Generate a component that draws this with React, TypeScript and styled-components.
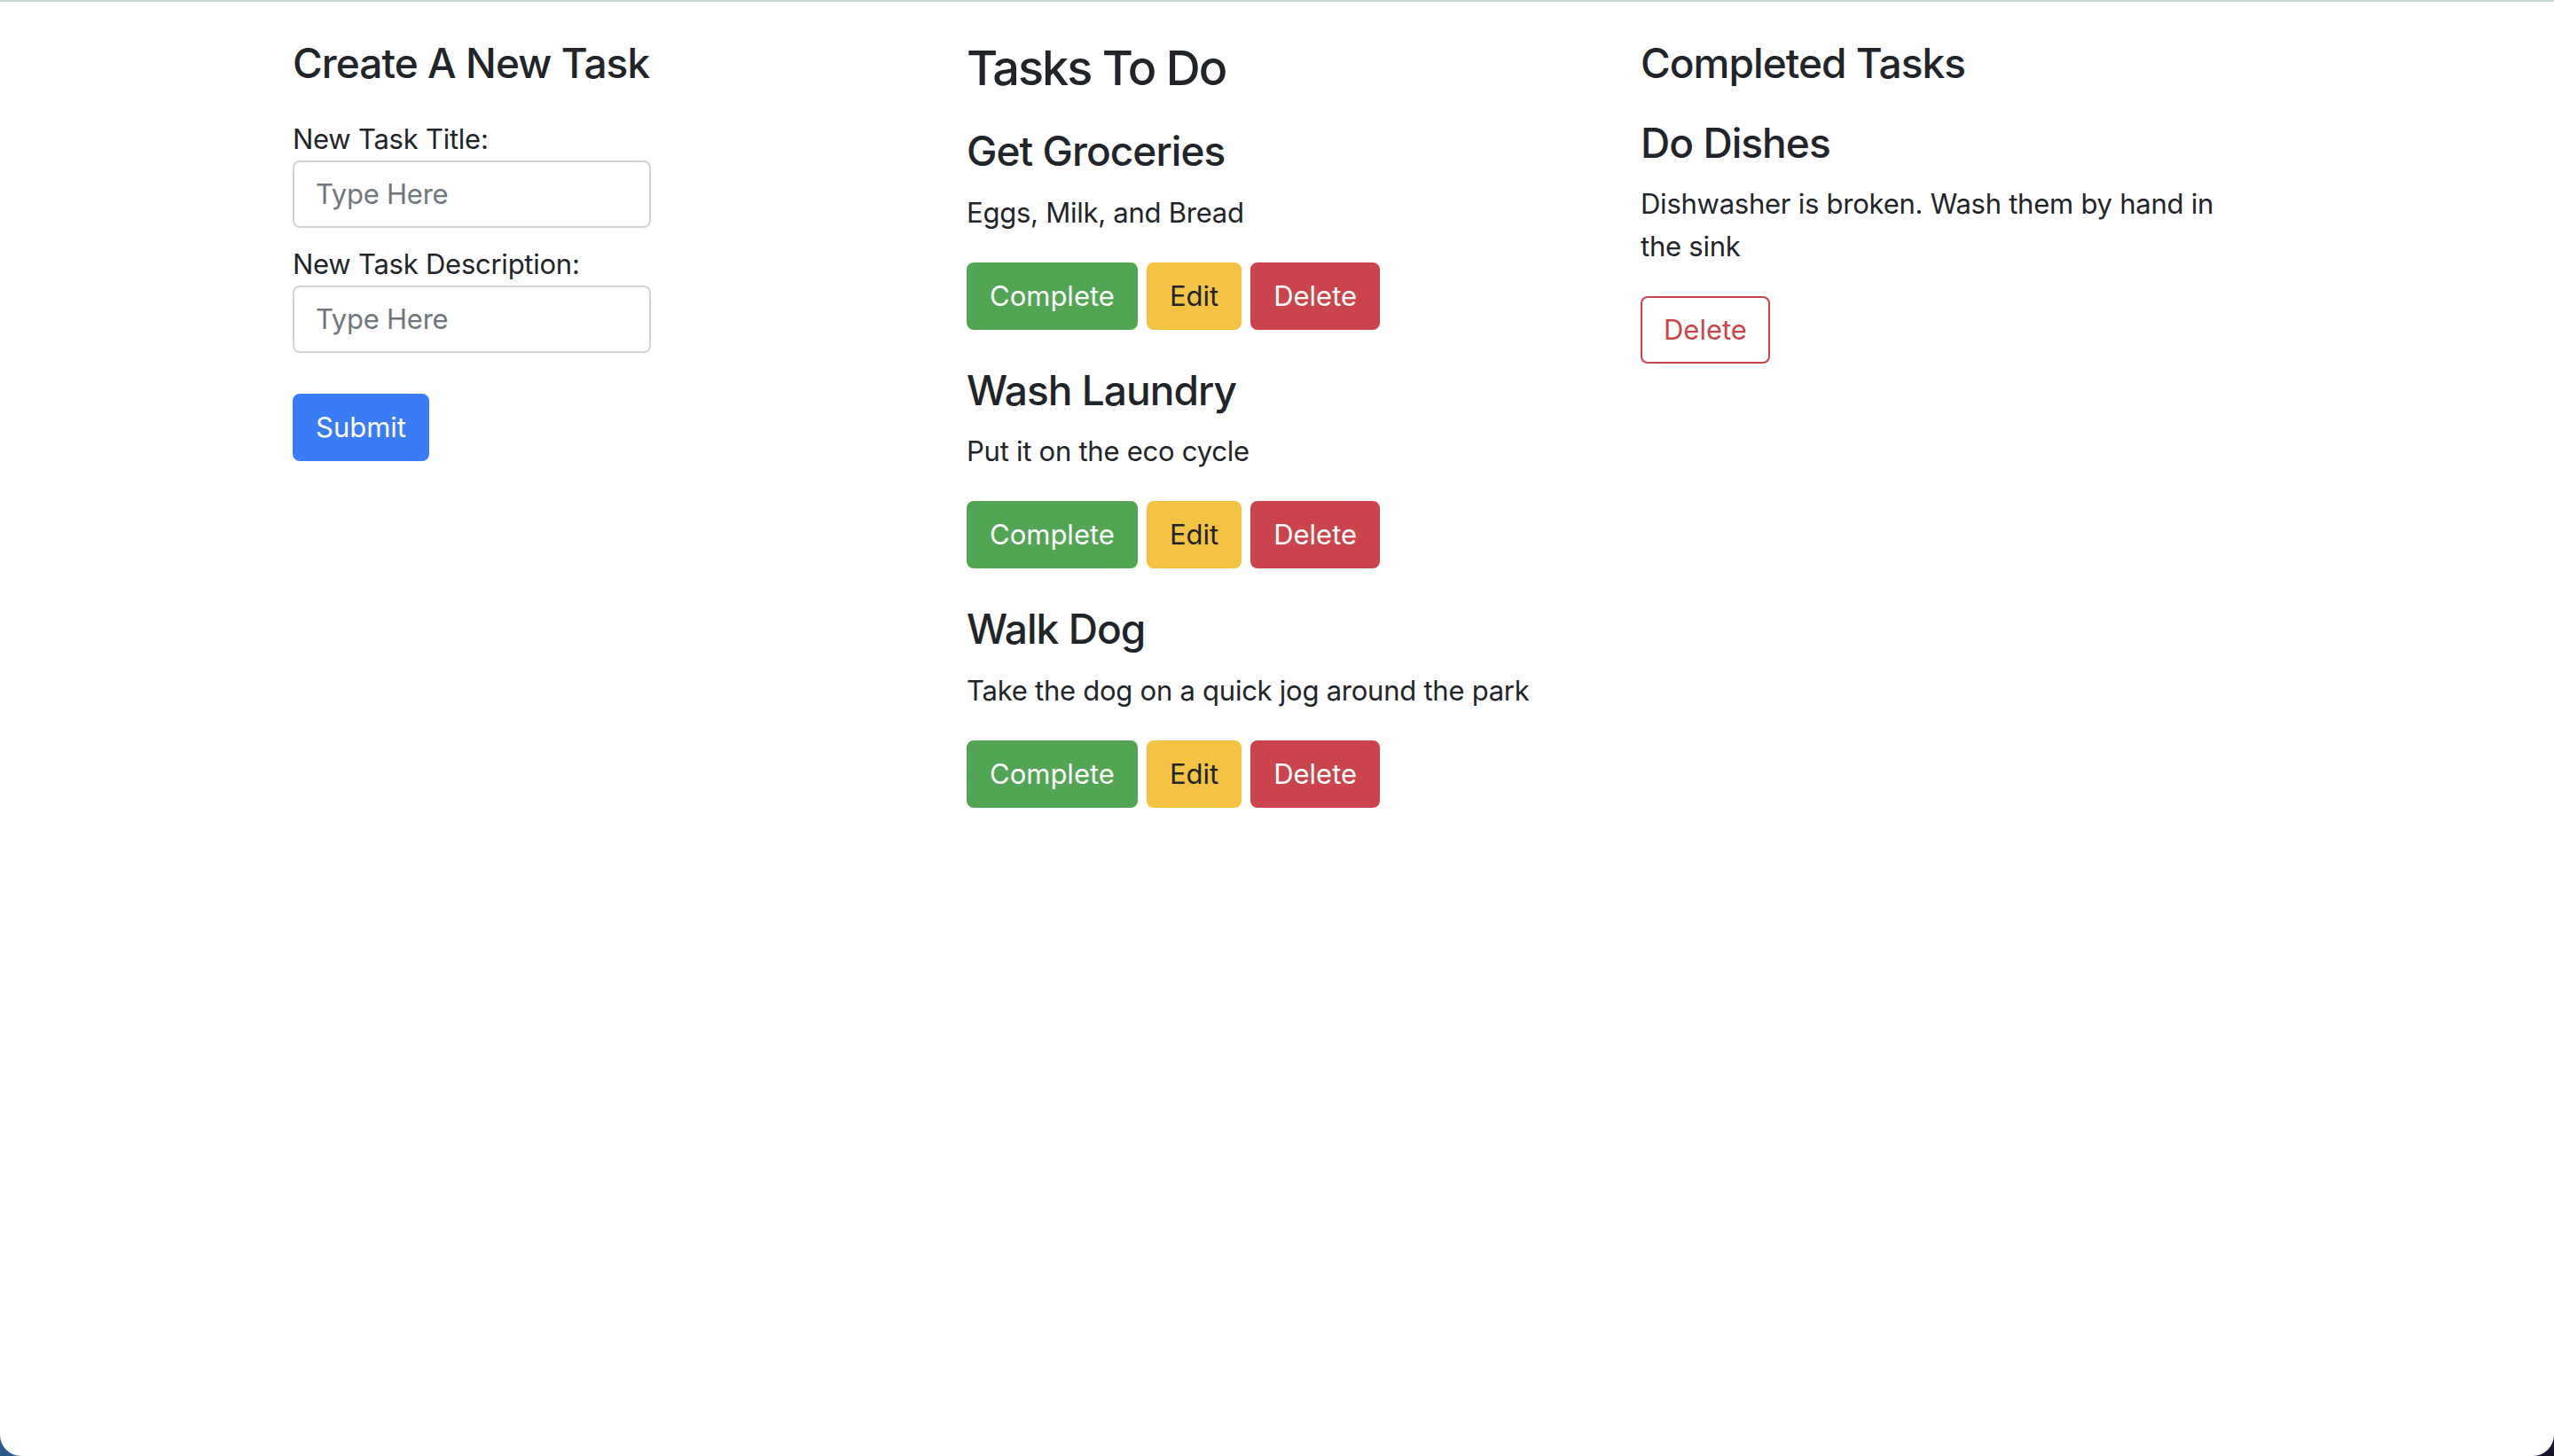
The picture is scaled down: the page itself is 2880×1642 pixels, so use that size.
import React from "react";
import styled, { createGlobalStyle, css } from "styled-components";

const GlobalStyle = createGlobalStyle`
  html, body {
    margin: 0;
    padding: 0;
  }
  body {
    background: linear-gradient(90deg, #2b5b8e 0%, #1d2a52 50%, #15152c 100%);
    font-family: Inter, "Noto Sans", "Liberation Sans", sans-serif;
    color: #212529;
  }
  * { box-sizing: border-box; }
`;

const Window = styled.div`
  min-height: 1642px;
  background: #ffffff;
  border-top: 2px solid #c6d8cd;
  border-bottom-left-radius: 24px;
  border-bottom-right-radius: 24px;
`;

const Container = styled.div`
  width: 2280px;
  margin: 0 auto;
  padding-top: 41px;
  display: grid;
  grid-template-columns: repeat(3, 1fr);
`;

const Column = styled.section`
  padding: 0 30px;
  min-width: 0;
`;

const SectionTitle = styled.h2<{ $large?: boolean }>`
  margin: 0 0 16px;
  font-weight: 500;
  font-size: ${(p) => (p.$large ? "54px" : "46px")};
  line-height: ${(p) => (p.$large ? "67px" : "57.6px")};
  letter-spacing: ${(p) => (p.$large ? "-2px" : "-0.95px")};
`;

const Form = styled.form`
  padding-top: 16px;
  display: flex;
  flex-direction: column;
  align-items: flex-start;
`;

const Label = styled.label`
  display: block;
  font-size: 31px;
  line-height: 48px;
  letter-spacing: -0.25px;
`;

const Input = styled.input`
  width: 404px;
  height: 76px;
  padding: 12px 24px;
  font-family: inherit;
  font-size: 31px;
  line-height: 48px;
  letter-spacing: -0.25px;
  color: #495057;
  border: 2px solid #cfd4d9;
  border-radius: 8px;
  margin: 0 0 17px;
  outline: none;
  &::placeholder {
    color: #70767d;
  }
`;

const SubmitRow = styled.div`
  margin-top: 29px;
`;

const variants = {
  primary: css`
    background: #3a7cf6;
    border-color: #3a7cf6;
    color: #ffffff;
  `,
  success: css`
    background: #52a552;
    border-color: #52a552;
    color: #ffffff;
  `,
  warning: css`
    background: #f5c343;
    border-color: #f5c343;
    color: #212529;
  `,
  danger: css`
    background: #cc444b;
    border-color: #cc444b;
    color: #ffffff;
  `,
  outlineDanger: css`
    background: #ffffff;
    border-color: #cc444b;
    color: #cc444b;
  `,
};

type Variant = keyof typeof variants;

const Button = styled.button<{ $variant: Variant }>`
  display: inline-block;
  height: 76px;
  padding: 12px 24px;
  font-family: inherit;
  font-size: 31px;
  line-height: 48px;
  letter-spacing: 0;
  font-weight: 400;
  border: 2px solid transparent;
  border-radius: 8px;
  cursor: pointer;
  ${(p) => variants[p.$variant]}
`;

const TaskList = styled.div`
  padding-top: 16px;
  display: flex;
  flex-direction: column;
  gap: 40px;
`;

const Task = styled.article``;

const TaskTitle = styled.h3`
  margin: 0 0 16px;
  font-size: 46px;
  line-height: 57.6px;
  font-weight: 500;
  letter-spacing: -0.95px;
`;

const TaskText = styled.p`
  margin: 0 0 32px;
  font-size: 31px;
  line-height: 48px;
  letter-spacing: -0.25px;
`;

const ButtonRow = styled.div`
  display: flex;
  gap: 10px;
`;

type TaskItem = { title: string; description: string };

const todo: TaskItem[] = [
  { title: "Get Groceries", description: "Eggs, Milk, and Bread" },
  { title: "Wash Laundry", description: "Put it on the eco cycle" },
  { title: "Walk Dog", description: "Take the dog on a quick jog around the park" },
];

const done: TaskItem[] = [
  {
    title: "Do Dishes",
    description: "Dishwasher is broken. Wash them by hand in the sink",
  },
];

export default function App() {
  return (
    <>
      <GlobalStyle />
      <Window>
        <Container>
          <Column>
            <SectionTitle>Create A New Task</SectionTitle>
            <Form onSubmit={(e) => e.preventDefault()}>
              <Label htmlFor="title">New Task Title:</Label>
              <Input id="title" placeholder="Type Here" />
              <Label htmlFor="desc">New Task Description:</Label>
              <Input id="desc" placeholder="Type Here" />
              <SubmitRow>
                <Button $variant="primary" type="submit">
                  Submit
                </Button>
              </SubmitRow>
            </Form>
          </Column>
          <Column>
            <SectionTitle $large>Tasks To Do</SectionTitle>
            <TaskList>
              {todo.map((t) => (
                <Task key={t.title}>
                  <TaskTitle>{t.title}</TaskTitle>
                  <TaskText>{t.description}</TaskText>
                  <ButtonRow>
                    <Button $variant="success">Complete</Button>
                    <Button $variant="warning">Edit</Button>
                    <Button $variant="danger">Delete</Button>
                  </ButtonRow>
                </Task>
              ))}
            </TaskList>
          </Column>
          <Column>
            <SectionTitle>Completed Tasks</SectionTitle>
            <TaskList>
              {done.map((t) => (
                <Task key={t.title}>
                  <TaskTitle>{t.title}</TaskTitle>
                  <TaskText>{t.description}</TaskText>
                  <ButtonRow>
                    <Button $variant="outlineDanger">Delete</Button>
                  </ButtonRow>
                </Task>
              ))}
            </TaskList>
          </Column>
        </Container>
      </Window>
    </>
  );
}
